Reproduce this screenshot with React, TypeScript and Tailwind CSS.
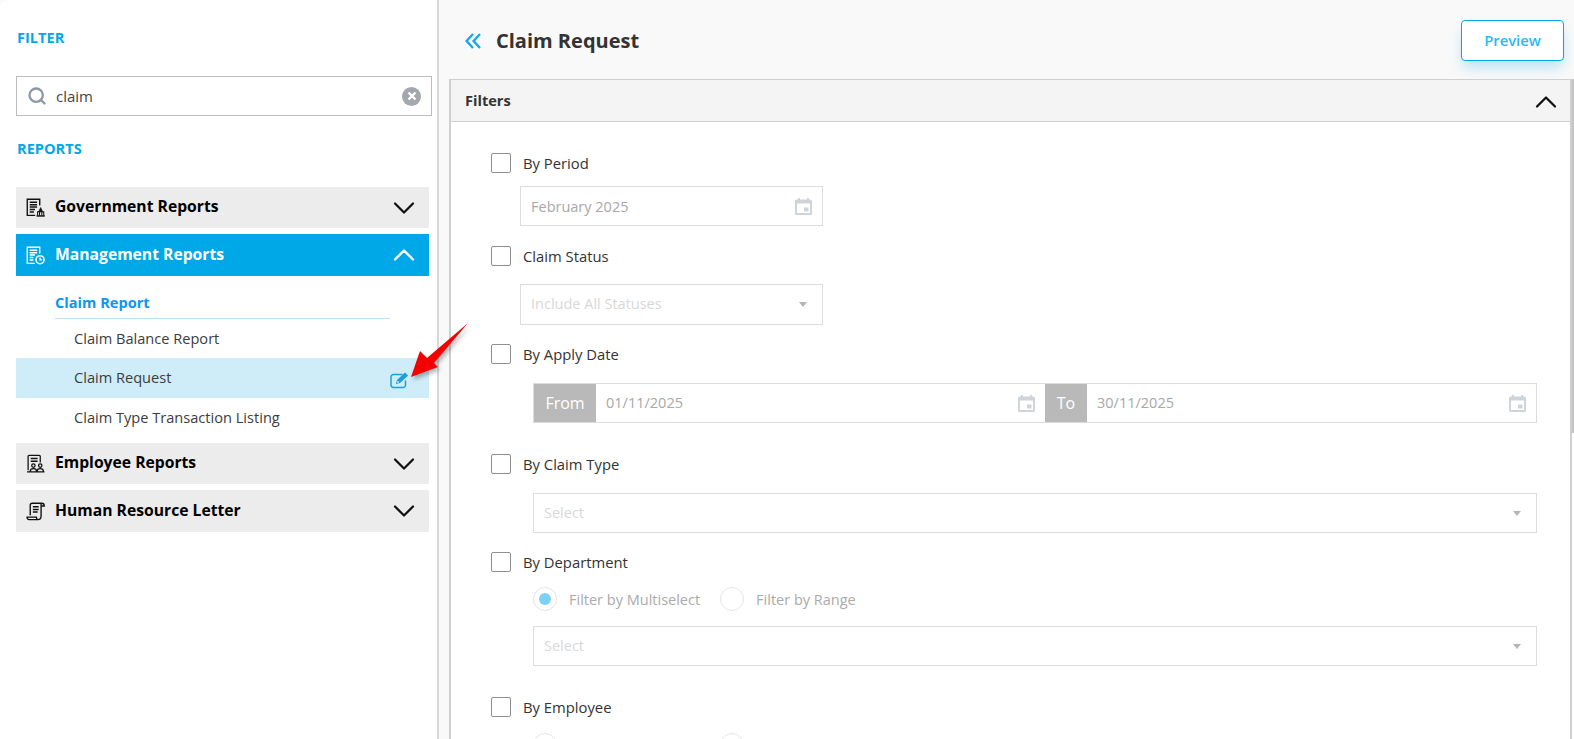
import { ChevronDown, ChevronUp, Search } from 'lucide-react'

const GovIcon = () => (
  <svg width="19" height="19" viewBox="0 0 18 18" fill="none" stroke="#111" strokeWidth="1.300">
    <path d="M13 7V1.200H1.200v15.300h7.500" />
    <path d="M3.500 4h7M3.500 6.300h7M3.500 8.600h7M3.500 10.900h5M3.500 13.200h4" strokeWidth="1.400" />
    <path d="M10 17h7.800" strokeWidth="1.400" />
    <path d="M11 16.500v-3.500h5.800v3.500M12.800 16.500v-3.500M15 16.500v-3.500" strokeWidth="1" />
    <path d="M12 13l1.900-4 1.900 4z" fill="#111" strokeWidth="0.600" />
  </svg>
)

const MgmtIcon = () => (
  <svg width="19" height="19" viewBox="0 0 18 18" fill="none" stroke="#fff" strokeWidth="1.300">
    <path d="M13 7V1.200H1.200v15.300h7" />
    <path d="M3.500 4h7M3.500 6.300h7M3.500 8.600h5M3.500 10.900h3.500M3.500 13.200h3.500" strokeWidth="1.400" />
    <circle cx="13.300" cy="13" r="3.800" strokeWidth="1.500" />
    <path d="M13.300 10.800v2.400h2" />
  </svg>
)

const EmployeeIcon = () => (
  <svg width="19" height="19" viewBox="0 0 18 18" fill="none" stroke="#111" strokeWidth="1.200">
    <path d="M2 15.500V2.200a1 1 0 0 1 1-1h9.500a1 1 0 0 1 1 1V8" />
    <path d="M4.500 4.300h6.500M4.500 6.800h6.500" strokeWidth="1.400" />
    <circle cx="7" cy="11" r="1.600" />
    <circle cx="13.500" cy="11" r="1.600" />
    <path d="M1 17h16.500M4 16.500c0-3.500 6-3.500 6 0M10.500 16.500c0-3.500 6-3.500 6 0" />
  </svg>
)

const LetterIcon = () => (
  <svg width="19" height="19" viewBox="0 0 18 18" fill="none" stroke="#111" strokeWidth="1.300">
    <path d="M4 12.500V3c0-1 .7-1.800 1.800-1.800H15c1.500 0 2.300 1 2.300 2.600h-3" />
    <path d="M14.300 1.500V13c0 2.200-1 3.700-3 3.700H3c-1.400 0-2-1-2-2.400h8.800c0 1 .3 1.700 1 2.100" />
    <path d="M6.500 4.500h5.500M6.500 7h5.500M6.500 9.500h4.500" strokeWidth="1.400" />
  </svg>
)

const EditIcon = () => (
  <svg width="20" height="18" viewBox="0 0 20 18" fill="none">
    <path d="M15.500 9.500V14a2.500 2.500 0 0 1-2.500 2.500H3.500A2.500 2.500 0 0 1 1 14V6a2.500 2.500 0 0 1 2.500-2.500h9" stroke="#1d9fdc" strokeWidth="1.500" />
    <path d="M5.800 13l1.200-4 8-7.500 3.200 3-8.200 7.400z" fill="#1d9fdc" />
    <circle cx="8" cy="11" r="0.900" fill="#cfedf9" />
  </svg>
)

const CalendarIcon = () => (
  <svg width="17" height="17" viewBox="0 0 17 17" className="shrink-0">
    <path d="M3 0h2v1.500h7V0h2v1.500h1.500A1.500 1.500 0 0 1 17 3v12.500a1.500 1.500 0 0 1-1.500 1.500h-14A1.500 1.500 0 0 1 0 15.500V3a1.500 1.500 0 0 1 1.500-1.500H3z" fill="#cfd4d8" />
    <rect x="2" y="5.500" width="13" height="9.500" fill="#fff" />
    <rect x="9" y="9.500" width="4.500" height="4" fill="#cfd4d8" />
  </svg>
)

const Caret = () => <span className="h-0 w-0 border-x-[4.500px] border-t-[5px] border-x-transparent border-t-[#b5b5b5]" />

const Check = ({ label, className }: { label: string; className: string }) => (
  <div className={`flex h-5 items-center ${className}`}>
    <span className="h-5 w-5 rounded-[2px] border border-[#8f8f8f] bg-white" />
    <span className="ml-3 text-[14.800px] font-medium text-[#333]">{label}</span>
  </div>
)

const SelectBox = ({ text, className }: { text: string; className: string }) => (
  <div className={`flex items-center justify-between border border-[#dcdcdc] bg-white pl-[10px] pr-[15px] text-[14.500px] text-[#d8d8d8] ${className}`}>
    <span className="pb-[1px]">{text}</span>
    <Caret />
  </div>
)

const DateBox = ({ text, textClass = '' }: { text: string; textClass?: string }) => (
  <div className="flex flex-1 items-center justify-between pl-[10px] pr-[10px] text-[14.500px] text-[#a8a8a8]">
    <span className={textClass}>{text}</span>
    <CalendarIcon />
  </div>
)

const RadioRow = ({ className }: { className: string }) => (
  <div className={`flex h-6 items-center pl-[84px] text-[14.500px] text-[#aaa] ${className}`}>
    <span className="flex h-6 w-6 items-center justify-center rounded-full border border-[#e4e4e4] bg-white">
      <span className="h-3 w-3 rounded-full bg-[#7bd2f5]" />
    </span>
    <span className="ml-3 pt-[1px]">Filter by Multiselect</span>
    <span className="ml-5 h-6 w-6 rounded-full border border-[#e4e4e4] bg-white" />
    <span className="ml-3 pt-[1px]">Filter by Range</span>
  </div>
)

const Group = ({ title, icon, className }: { title: string; icon: React.ReactNode; className: string }) => (
  <div className={`flex items-center bg-[#ececec] pl-[10px] pr-[7px] text-[15.700px] font-bold text-black ${className}`}>
    <span className="flex w-[29px]">{icon}</span>
    <span className="flex-1 pb-[1px]">{title}</span>
    <ChevronDown size={36} strokeWidth={1.500} color="#111" />
  </div>
)

export default function App() {
  return (
    <div className="flex h-screen overflow-hidden bg-[#f9f9f9] font-['Open_Sans',sans-serif]">
      <aside className="relative h-full w-[439px] shrink-0 rounded-tl-lg border-r-2 border-[#d8d8d8] bg-white pt-[27px]">
        <h2 className="ml-[17px] text-[14.600px] leading-5 font-bold text-[#00a8e8]">FILTER</h2>

        <div className="mt-[29px] ml-4 flex h-10 w-[416px] items-center border border-[#bdbdbd] pl-[10px] pr-[10px] text-[15px] text-[#444]">
          <Search size={20} strokeWidth={2.800} color="#8e9aa3" />
          <span className="ml-[9px] flex-1">claim</span>
          <span className="flex h-[19px] w-[19px] items-center justify-center rounded-full bg-[#a2a8ad]">
            <svg width="10" height="10" viewBox="0 0 10 10" stroke="#fff" strokeWidth="2.400"><path d="M1.500 1.500l7 7M8.500 1.500l-7 7" /></svg>
          </span>
        </div>

        <h2 className="mt-[22px] ml-[17px] text-[14.600px] leading-5 font-bold text-[#00a8e8]">REPORTS</h2>

        <div className="mt-[29px] ml-4 w-[413px]">
          <Group title="Government Reports" icon={<GovIcon />} className="h-[41px]" />

          <div className="mt-[6px] flex h-[42px] items-center bg-[#00a8e8] pl-[10px] pr-[7px] text-[15.700px] font-bold text-white">
            <span className="flex w-[29px]"><MgmtIcon /></span>
            <span className="flex-1 pb-[1px]">Management Reports</span>
            <ChevronUp size={36} strokeWidth={1.600} color="#fff" />
          </div>

          <div className="mt-[14px] ml-[39px] mr-[39px] h-[29px] border-b border-[#b9e5f7] text-[14.600px] leading-6 font-bold text-[#0f96ee]">
            Claim Report
          </div>
          <div className="flex h-[39px] items-center pl-[58px] text-[14.600px] text-[#3c3c3c]">Claim Balance Report</div>
          <div className="flex h-10 items-center justify-between bg-[#cfedf9] pl-[58px] pr-[19px] text-[14.600px] text-[#3c3c3c]">
            <span className="pb-[1px]">Claim Request</span>
            <span className="mt-1"><EditIcon /></span>
          </div>
          <div className="flex h-[39px] items-center pl-[58px] text-[14.600px] text-[#3c3c3c]">Claim Type Transaction Listing</div>

          <Group title="Employee Reports" icon={<EmployeeIcon />} className="mt-[6px] h-[41px]" />
          <Group title="Human Resource Letter" icon={<LetterIcon />} className="mt-[6px] h-[42px]" />
        </div>
      </aside>

      <main className="flex min-w-0 flex-1 flex-col">
        <header className="flex h-[79px] shrink-0 items-center justify-between pt-[2px] pl-[26px] pr-[10px]">
          <div className="flex items-center">
            <svg width="16" height="16" viewBox="0 0 16 16" fill="none" stroke="#1aa7e6" strokeWidth="2.400">
              <path d="M8 1L1.600 8L8 15M15 1L8.600 8L15 15" />
            </svg>
            <h1 className="ml-[15px] text-[20px] font-bold text-[#333]">Claim Request</h1>
          </div>
          <button
            type="button"
            className="h-[41px] w-[103px] rounded-[4px] border border-[#00a8e8] bg-white text-[14.800px] font-semibold text-[#1fbcf5] shadow-[0_8px_14px_-2px_rgba(0,168,232,0.28)]"
          >
            Preview
          </button>
        </header>

        <div className="flex min-h-0 flex-1 pl-[10px]">
          <section className="min-w-0 flex-1 border-t border-l-2 border-r-2 border-[#cfcfcf] bg-white">
            <div className="flex h-[42px] items-center justify-between border-b border-[#cfcfcf] bg-[#f4f4f4] pl-[14px] pr-[6px] text-[14.600px] font-bold text-[#333]">
              <span>Filters</span>
              <ChevronUp size={36} strokeWidth={1.500} color="#111" className="mt-[2px]" />
            </div>

            <div className="pt-[31px] pl-[40px] pr-[33px]">
              <Check label="By Period" className="" />
              <div className="mt-[13px] ml-[29px] flex h-10 w-[303px] items-center border border-[#dcdcdc] bg-white">
                <DateBox text="February 2025" textClass="pt-[1px]" />
              </div>

              <Check label="Claim Status" className="mt-[20px]" />
              <SelectBox text="Include All Statuses" className="mt-[18px] ml-[29px] h-[41px] w-[303px]" />

              <Check label="By Apply Date" className="mt-[19px]" />
              <div className="mt-[19px] ml-[42px] flex h-10 border border-[#dcdcdc] bg-white">
                <span className="flex w-[62px] items-center justify-center bg-[#b9b9b9] text-[16px] text-white">From</span>
                <DateBox text="01/11/2025" />
                <span className="flex w-[42px] items-center justify-center bg-[#b9b9b9] text-[16px] text-white">To</span>
                <DateBox text="30/11/2025" />
              </div>

              <Check label="By Claim Type" className="mt-[31px]" />
              <SelectBox text="Select" className="mt-[19px] ml-[42px] h-10" />

              <Check label="By Department" className="mt-[19px]" />
              <RadioRow className="mt-[15px] -ml-[42px]" />
              <SelectBox text="Select" className="mt-[15px] ml-[42px] h-10" />

              <Check label="By Employee" className="mt-[31px]" />
              <RadioRow className="mt-[16px] -ml-[42px]" />
            </div>
          </section>
          <div className="w-[2px] shrink-0 bg-white">
            <div className="h-[354px] bg-[#c4c4c4]" />
          </div>
        </div>
      </main>

      {/* red annotation arrow sits over the sidebar */}
      <svg className="pointer-events-none absolute top-0 left-0 drop-shadow-[2px_3px_2px_rgba(0,0,0,0.3)]" width="1574" height="739" fill="none">
        <polygon points="411,377 420,351 427,358 468,323 434,363 438,367" fill="#f40000" />
      </svg>
    </div>
  )
}
